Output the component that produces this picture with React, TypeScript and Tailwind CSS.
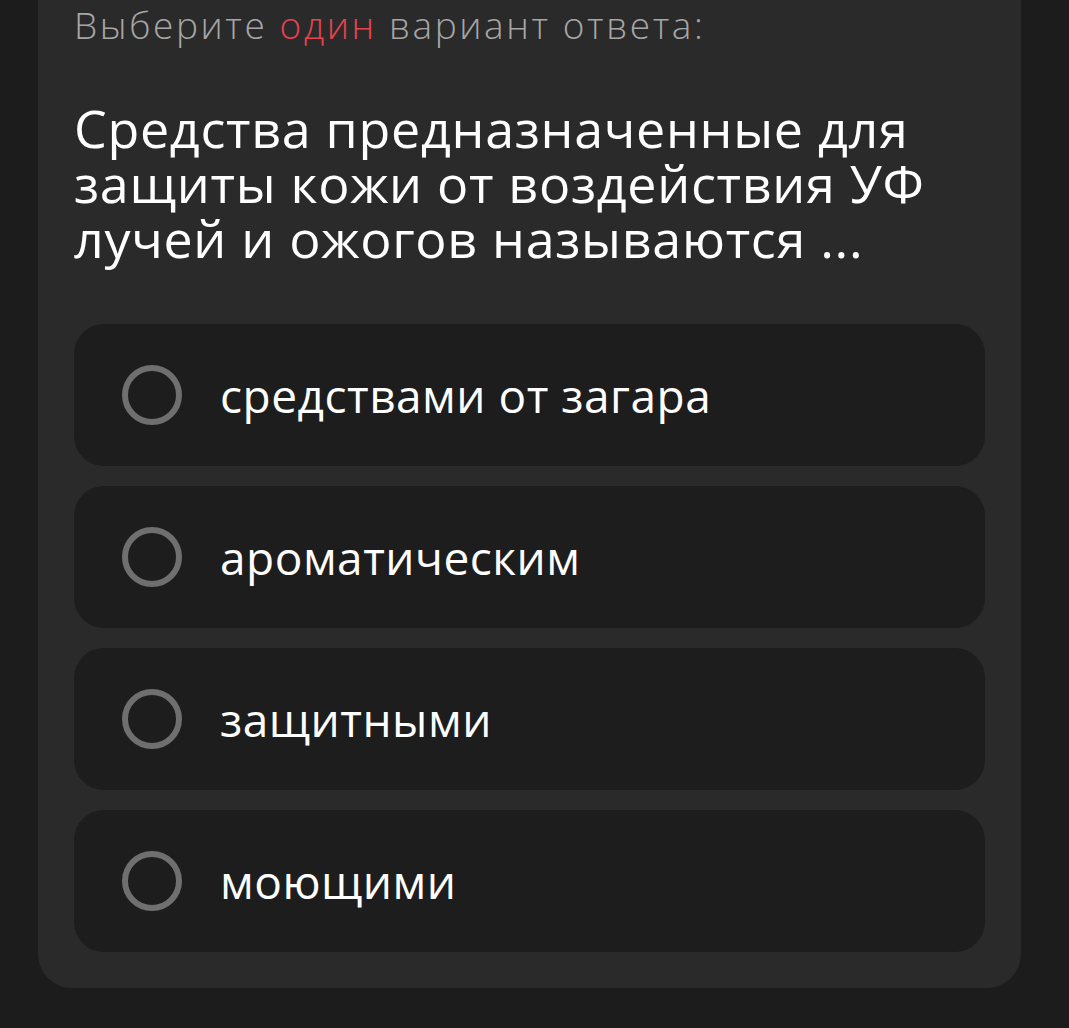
import React from "react";

const options = ["средствами от загара", "ароматическим", "защитными", "моющими"];
const lines = ["Средства предназначенные для", "защиты кожи от воздействия УФ", "лучей и ожогов называются ..."];

export default function App() {
  return (
    <div className="min-h-[1028px] w-full bg-[#1c1c1c] pl-[38px] pr-[48px]" style={{ fontFamily: '"Open Sans", "Noto Sans", sans-serif' }}>
      <div className="rounded-b-[34px] bg-[#2a2a2a] px-[36px] pb-[36px] pt-0">
        <div className="text-[37px] font-light leading-[50px] tracking-[2.6px] text-[#a6a6a6]">
          Выберите <span className="text-[#e6434f]">один</span> вариант ответа:
        </div>
        <div className="mt-[50px] flex flex-col text-[52px] tracking-[0.7px] text-white">
          {lines.map((l) => (
            <div key={l} className="h-[55px] leading-[55px]">{l}</div>
          ))}
        </div>
        <div className="mt-[59px] flex flex-col gap-[20px]">
          {options.map((o) => (
            <div key={o} className="flex h-[142px] items-center rounded-[30px] bg-[#1d1d1d] pl-[48px]">
              <div className="h-[60px] w-[60px] shrink-0 rounded-full border-[6px] border-[#6f6f6f]" />
              <div className="ml-[38px] text-[46px] leading-[50px] tracking-[0.5px] text-white">{o}</div>
            </div>
          ))}
        </div>
      </div>
    </div>
  );
}
